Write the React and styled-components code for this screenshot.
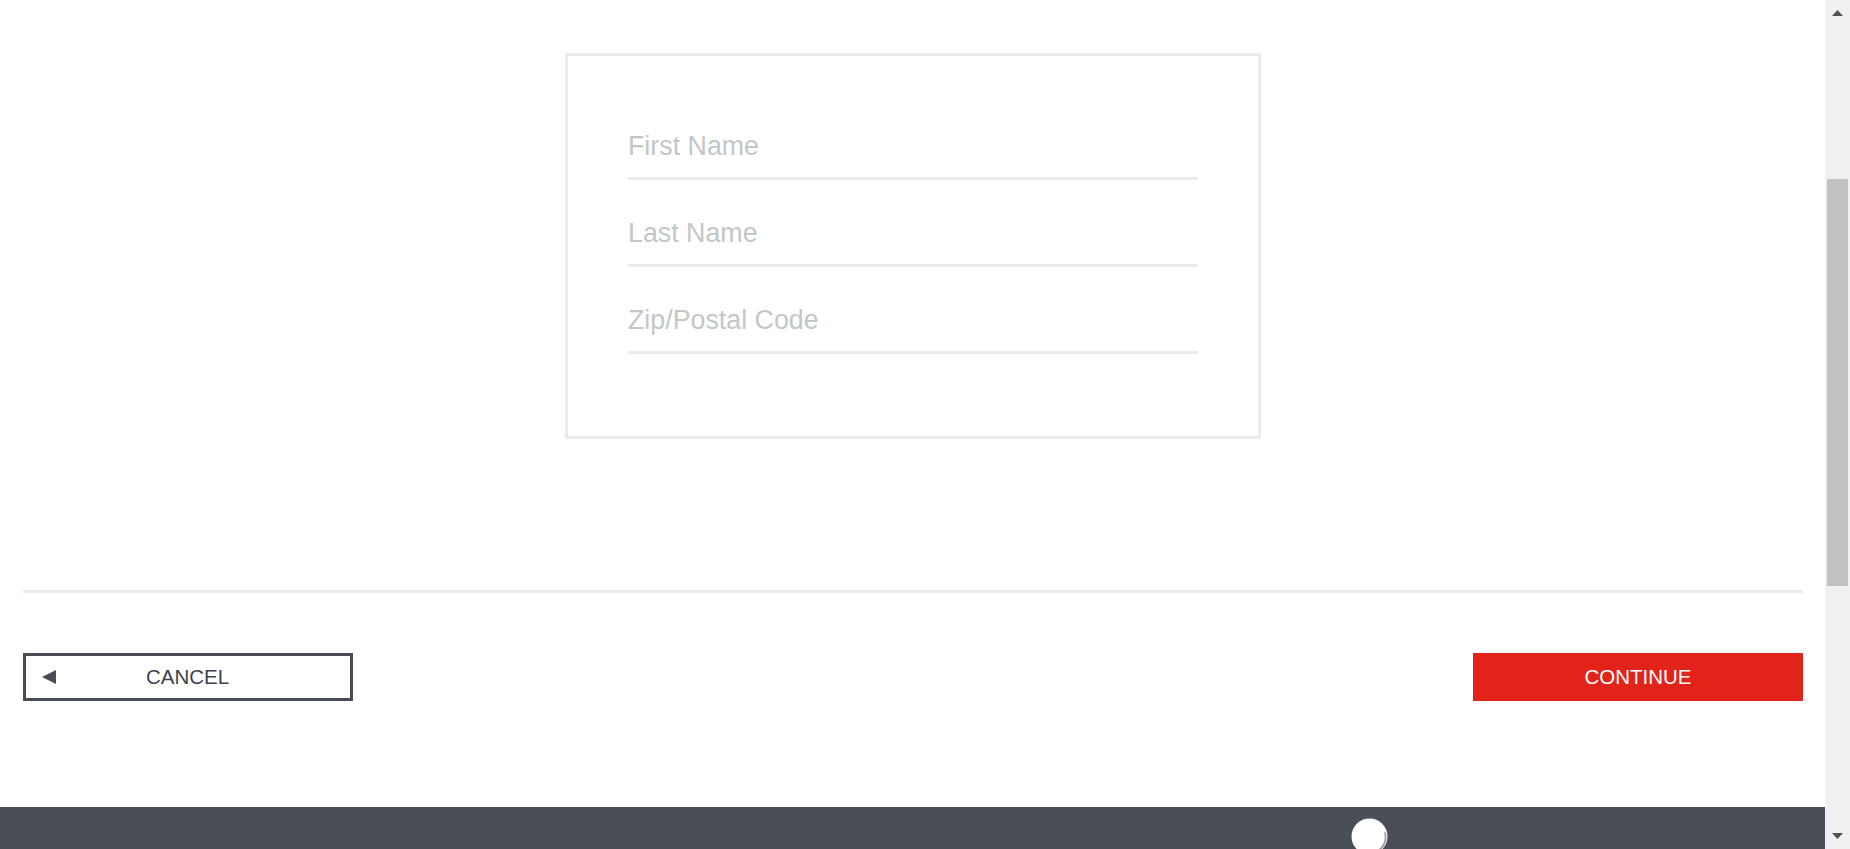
import React from 'react';
import styled, { createGlobalStyle } from 'styled-components';

const GlobalStyle = createGlobalStyle`
  html, body {
    margin: 0;
    padding: 0;
    height: 100%;
    overflow: hidden;
    background: #ffffff;
  }
  body {
    font-family: "Liberation Sans", Arial, sans-serif;
  }
  *, *::before, *::after {
    box-sizing: border-box;
  }
`;

const Page = styled.div`
  margin-right: 25px;
  height: 100vh;
  display: flex;
  flex-direction: column;
`;

const Main = styled.main`
  padding: 53px 22px 0 23px;
  display: flex;
  flex-direction: column;
`;

const Card = styled.form`
  align-self: center;
  width: 696px;
  border: 3px solid #ebebeb;
  padding: 37px 60px 82px;
`;

const Field = styled.input`
  display: block;
  width: 100%;
  height: 50px;
  margin: 37px 0 0;
  padding: 1px 0 16px;
  border: 0;
  border-bottom: 3px solid #ebebeb;
  border-radius: 0;
  background: transparent;
  font-family: "Liberation Sans", Arial, sans-serif;
  font-size: 26.8px;
  line-height: 30px;
  color: #333840;
  outline: none;

  &::placeholder {
    color: #c2c7c7;
    opacity: 1;
  }
`;

const Divider = styled.hr`
  margin: 151px 0 0;
  height: 3px;
  border: 0;
  background: #ebebeb;
`;

const ButtonRow = styled.div`
  margin-top: 60px;
  display: flex;
  justify-content: space-between;
  align-items: center;
`;

const BaseButton = styled.button`
  width: 330px;
  height: 48px;
  font-family: "Liberation Sans", Arial, sans-serif;
  font-size: 20.5px;
  text-transform: uppercase;
  cursor: pointer;
  border-radius: 0;
`;

const CancelButton = styled(BaseButton)`
  display: grid;
  grid-template-columns: 1fr auto 1fr;
  align-items: center;
  padding: 0 17px 0 16px;
  background: #ffffff;
  border: 3px solid #494c55;
  color: #3d424c;
`;

const CancelArrow = styled.svg`
  justify-self: start;
  display: block;
`;

const ContinueButton = styled(BaseButton)`
  border: 0;
  background: #e2231a;
  color: #ffffff;
`;

const Footer = styled.footer`
  margin-top: 106px;
  flex: 1;
  background: #4a4e57;
  display: flex;
  justify-content: flex-end;
  align-items: flex-start;
  padding: 11px 437px 0 0;
`;

const Logo = styled.svg`
  display: block;
`;

const ScrollBar = styled.div`
  position: fixed;
  top: 0;
  right: 0;
  width: 25px;
  height: 100vh;
  background: #f0f0f0;
  display: flex;
  flex-direction: column;
`;

const ScrollButton = styled.div`
  height: 25px;
  display: flex;
  justify-content: center;
  align-items: ${(p) => (p.$down ? 'flex-start' : 'flex-end')};
  padding: ${(p) => (p.$down ? '9px 0 0' : '0 0 9px')};
`;

const Track = styled.div`
  flex: 1;
  position: relative;
`;

const Thumb = styled.div`
  position: absolute;
  left: 2px;
  right: 2px;
  top: 154px;
  height: 407px;
  background: #c1c1c1;
`;

export default function App() {
  return (
    <>
      <GlobalStyle />
      <Page>
        <Main>
          <Card onSubmit={(e) => e.preventDefault()}>
            <Field type="text" placeholder="First Name" />
            <Field type="text" placeholder="Last Name" />
            <Field type="text" placeholder="Zip/Postal Code" />
          </Card>
          <Divider />
          <ButtonRow>
            <CancelButton type="button">
              <CancelArrow width="14" height="14" viewBox="0 0 14 14">
                <polygon points="14,0 0,7 14,14" fill="#494c55" />
              </CancelArrow>
              <span>Cancel</span>
              <span />
            </CancelButton>
            <ContinueButton type="button">Continue</ContinueButton>
          </ButtonRow>
        </Main>
        <Footer>
          <Logo width="37" height="37" viewBox="0 0 37 37">
            <circle cx="18.5" cy="18.5" r="18" fill="#ffffff" />
            <path
              d="M34 15 A15.5 15.5 0 0 1 24 34"
              fill="none"
              stroke="#9a9da2"
              strokeWidth="1.8"
              strokeLinecap="round"
            />
          </Logo>
        </Footer>
      </Page>
      <ScrollBar aria-hidden="true">
        <ScrollButton>
          <svg width="11" height="6" viewBox="0 0 11 6">
            <polygon points="0,6 5.5,0 11,6" fill="#505050" />
          </svg>
        </ScrollButton>
        <Track>
          <Thumb />
        </Track>
        <ScrollButton $down>
          <svg width="11" height="6" viewBox="0 0 11 6">
            <polygon points="0,0 11,0 5.5,6" fill="#505050" />
          </svg>
        </ScrollButton>
      </ScrollBar>
    </>
  );
}
